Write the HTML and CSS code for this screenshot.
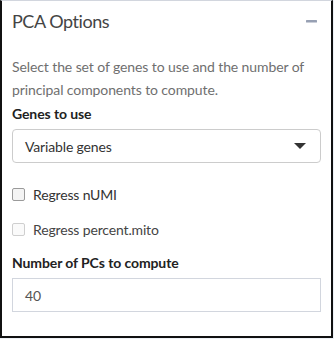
FILE: index.html
```html
<!DOCTYPE html>
<html lang="en">
<head>
  <meta charset="UTF-8" />
  <title>PCA Options</title>
  <link rel="stylesheet" href="styles.css">
</head>
<body>
  <div class="box">
    <div class="box-header">
      <h3 class="box-title">PCA Options</h3>
      <button class="btn-tool" aria-label="Collapse">
        <svg width="11" height="3" viewBox="0 0 11 3"><rect width="11" height="2.5" rx="0.5" fill="#97a0b3"/></svg>
      </button>
    </div>
    <div class="box-body">
      <p class="help">Select the set of genes to use and the number of principal components to compute.</p>

      <label class="control-label">Genes to use</label>
      <div class="select">
        <span>Variable genes</span>
        <span class="caret"></span>
      </div>

      <div class="checkbox">
        <span class="check"></span>
        <span>Regress nUMI</span>
      </div>
      <div class="checkbox disabled">
        <span class="check"></span>
        <span>Regress percent.mito</span>
      </div>

      <label class="control-label">Number of PCs to compute</label>
      <div class="num-input">40</div>
    </div>
  </div>
</body>
</html>
```

FILE: styles.css
```css
body {
  margin: 0;
  background: #ecf0f5;
  font-family: Lato, "Liberation Sans", sans-serif;
  color: #333;
}

.box {
  width: 329px;
  height: 335px;
  background: #fff;
  border-left: 2px solid #111;
  border-right: 2px solid #111;
  border-bottom: 2px solid #111;
  border-top: 1px solid #d2d6de;
}

.box-header {
  display: flex;
  align-items: center;
  justify-content: space-between;
  padding: 5px 14px 0 10px;
  height: 30px;
}

.box-title {
  margin: 0;
  font-size: 18px;
  letter-spacing: -0.45px;
  font-weight: 400;
  color: #444;
}

.btn-tool {
  border: none;
  background: none;
  padding: 0;
  display: flex;
}

.box-body {
  padding: 19px 10px 0 10px;
}

.help {
  margin: 0 0 4px;
  font-size: 14px;
  letter-spacing: -0.1px;
  line-height: 23px;
  color: #6f6f6f;
}

.control-label {
  display: block;
  font-size: 14px;
  line-height: 18px;
  letter-spacing: -0.1px;
  font-weight: 700;
  color: #222;
  margin-bottom: 6px;
}

.select {
  display: flex;
  align-items: center;
  justify-content: space-between;
  height: 32px;
  border: 1px solid #ccc;
  border-radius: 4px;
  padding: 0 12px;
  font-size: 14px;
  letter-spacing: -0.15px;
  color: #333;
  margin-bottom: 21px;
}

.caret {
  width: 0;
  height: 0;
  border-left: 6px solid transparent;
  border-right: 6px solid transparent;
  border-top: 6px solid #333;
  margin-right: 2px;
}

.checkbox {
  display: flex;
  align-items: center;
  gap: 8px;
  font-size: 14px;
  letter-spacing: -0.15px;
  color: #333;
  height: 20px;
  margin-bottom: 15px;
}

.check {
  width: 11px;
  height: 11px;
  border: 1px solid #9a9a9a;
  border-radius: 2px;
  background: #f4f4f4;
}

.disabled .check {
  border-color: #cfcfcf;
  background: #fafafa;
}

.disabled {
  color: #444;
}

.num-input {
  height: 32px;
  border: 1px solid #d2d6de;
  padding: 0 12px;
  display: flex;
  align-items: center;
  font-size: 14px;
  color: #555;
}
```
